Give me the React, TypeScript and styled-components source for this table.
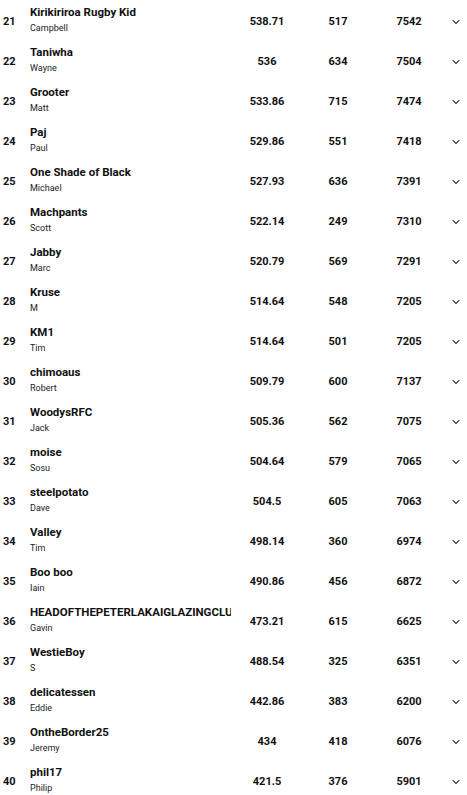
import React from 'react';
import styled, { createGlobalStyle } from 'styled-components';
import { ChevronDown } from 'lucide-react';

interface Entry {
  rank: number;
  team: string;
  manager: string;
  avg: string;
  round: number;
  total: number;
}

const entries: Entry[] = [
  { rank: 21, team: 'Kirikiriroa Rugby Kid', manager: 'Campbell', avg: '538.71', round: 517, total: 7542 },
  { rank: 22, team: 'Taniwha', manager: 'Wayne', avg: '536', round: 634, total: 7504 },
  { rank: 23, team: 'Grooter', manager: 'Matt', avg: '533.86', round: 715, total: 7474 },
  { rank: 24, team: 'Paj', manager: 'Paul', avg: '529.86', round: 551, total: 7418 },
  { rank: 25, team: 'One Shade of Black', manager: 'Michael', avg: '527.93', round: 636, total: 7391 },
  { rank: 26, team: 'Machpants', manager: 'Scott', avg: '522.14', round: 249, total: 7310 },
  { rank: 27, team: 'Jabby', manager: 'Marc', avg: '520.79', round: 569, total: 7291 },
  { rank: 28, team: 'Kruse', manager: 'M', avg: '514.64', round: 548, total: 7205 },
  { rank: 29, team: 'KM1', manager: 'Tim', avg: '514.64', round: 501, total: 7205 },
  { rank: 30, team: 'chimoaus', manager: 'Robert', avg: '509.79', round: 600, total: 7137 },
  { rank: 31, team: 'WoodysRFC', manager: 'Jack', avg: '505.36', round: 562, total: 7075 },
  { rank: 32, team: 'moise', manager: 'Sosu', avg: '504.64', round: 579, total: 7065 },
  { rank: 33, team: 'steelpotato', manager: 'Dave', avg: '504.5', round: 605, total: 7063 },
  { rank: 34, team: 'Valley', manager: 'Tim', avg: '498.14', round: 360, total: 6974 },
  { rank: 35, team: 'Boo boo', manager: 'Iain', avg: '490.86', round: 456, total: 6872 },
  { rank: 36, team: 'HEADOFTHEPETERLAKAIGLAZINGCLUB', manager: 'Gavin', avg: '473.21', round: 615, total: 6625 },
  { rank: 37, team: 'WestieBoy', manager: 'S', avg: '488.54', round: 325, total: 6351 },
  { rank: 38, team: 'delicatessen', manager: 'Eddie', avg: '442.86', round: 383, total: 6200 },
  { rank: 39, team: 'OntheBorder25', manager: 'Jeremy', avg: '434', round: 418, total: 6076 },
  { rank: 40, team: 'phil17', manager: 'Philip', avg: '421.5', round: 376, total: 5901 },
];

const GlobalStyle = createGlobalStyle`
  body {
    margin: 0;
    background: #ffffff;
    font-family: Roboto, "Liberation Sans", Arial, sans-serif;
    color: #111111;
  }
`;

const List = styled.div`
  display: flex;
  flex-direction: column;
  width: 467px;
`;

const Row = styled.div`
  display: flex;
  align-items: center;
  height: 40px;
`;

const Rank = styled.div`
  width: 27px;
  padding-left: 3px;
  font-size: 11px;
  font-weight: 700;
  padding-top: 2px;
`;

const TeamCell = styled.div`
  width: 201px;
  overflow: hidden;
  display: flex;
  flex-direction: column;
  gap: 4px;
`;

const TeamName = styled.div`
  font-size: 11.5px;
  font-weight: 700;
  line-height: 13px;
  white-space: nowrap;
`;

const Manager = styled.div`
  font-size: 9px;
  line-height: 11px;
  color: #222222;
  white-space: nowrap;
`;

const NumCell = styled.div<{ $width: number }>`
  width: ${p => p.$width}px;
  text-align: center;
  font-size: 11px;
  font-weight: 700;
  padding-top: 2px;
`;

const Toggle = styled.div`
  flex: 1;
  display: flex;
  justify-content: center;
  color: #444444;
  padding-top: 3px;
`;

const App = () => {
  return (
    <>
      <GlobalStyle />
      <List>
        {entries.map(e => (
          <Row key={e.rank}>
            <Rank>{e.rank}</Rank>
            <TeamCell>
              <TeamName>{e.team}</TeamName>
              <Manager>{e.manager}</Manager>
            </TeamCell>
            <NumCell $width={72}>{e.avg}</NumCell>
            <NumCell $width={70}>{e.round}</NumCell>
            <NumCell $width={72}>{e.total}</NumCell>
            <Toggle>
              <ChevronDown size={12} strokeWidth={2.2} />
            </Toggle>
          </Row>
        ))}
      </List>
    </>
  );
};

export default App;
